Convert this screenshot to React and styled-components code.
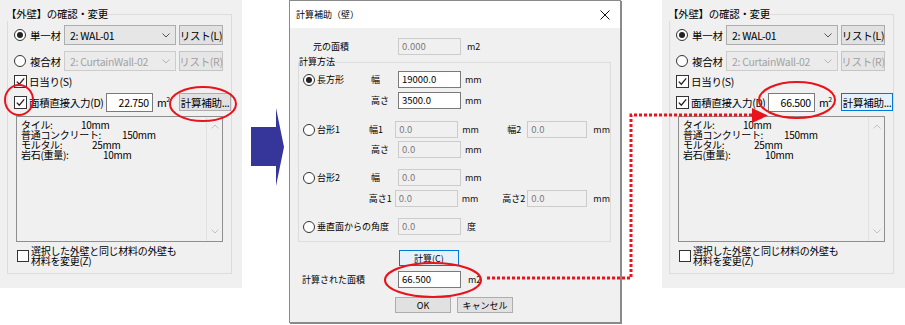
import styled, { createGlobalStyle } from "styled-components";

const GlobalStyle = createGlobalStyle`
  html, body {
    margin: 0;
    padding: 0;
    background: #ffffff;
  }
  body {
    font-family: "Noto Sans CJK JP", "Noto Sans", sans-serif;
    font-size: 11px;
    color: #000;
  }
  * {
    box-sizing: border-box;
  }
`;

const LINES = [
  { label: "タイル:", value: "10mm", tab: 60 },
  { label: "普通コンクリート:", value: "150mm", tab: 101 },
  { label: "モルタル:", value: "25mm", tab: 71 },
  { label: "岩石(重量):", value: "10mm", tab: 82 },
];

function CheckMark() {
  return (
    <svg width="9" height="9" viewBox="0 0 9 9">
      <polyline points="0.8,4.6 3.3,7.2 8.2,1.4" fill="none" stroke="#222" strokeWidth="1.3" />
    </svg>
  );
}

function Chevron({ color = "#555", up = false }) {
  return (
    <svg width="8" height="5" viewBox="0 0 8 5">
      <polyline
        points={up ? "0.5,4.5 4,1 7.5,4.5" : "0.5,0.5 4,4 7.5,0.5"}
        fill="none"
        stroke={color}
        strokeWidth="1"
      />
    </svg>
  );
}

function WallPanel({ area, focused, $w }) {
  return (
    <Panel $w={$w}>
      <Group>
        <Legend>【外壁】の確認・変更</Legend>
        <Row $mt={4}>
          <RadioLabel>
            <Radio $on />
            単一材
          </RadioLabel>
          <Combo>
            2: WAL-01
            <Chevron />
          </Combo>
          <WinButton $w={44}>リスト(L)</WinButton>
        </Row>
        <Row $mt={6}>
          <RadioLabel>
            <Radio />
            複合材
          </RadioLabel>
          <Combo $disabled>
            2: CurtainWall-02
            <Chevron color="#b5b5b5" />
          </Combo>
          <WinButton $w={44} disabled>
            リスト(R)
          </WinButton>
        </Row>
        <Row $mt={3} $h={14}>
          <Check>
            <CheckMark />
          </Check>
          <CheckText>日当り(S)</CheckText>
        </Row>
        <Row $mt={4}>
          <Check>
            <CheckMark />
          </Check>
          <CheckText $w={79}>面積直接入力(D)</CheckText>
          <AreaInput>{area}</AreaInput>
          <Unit>
            m<sup>2</sup>
          </Unit>
          <WinButton $w={53} $h={18} $focus={focused}>
            計算補助...
          </WinButton>
        </Row>
        <Memo>
          <MemoText>
            {LINES.map(l => (
              <MemoLine key={l.label}>
                <MemoLabel $tab={l.tab}>{l.label}</MemoLabel>
                {l.value}
              </MemoLine>
            ))}
          </MemoText>
          <ScrollBar>
            <Chevron color="#c2c2c2" up />
            <Chevron color="#c2c2c2" />
          </ScrollBar>
        </Memo>
        <SameRow>
          <Check $size={12} />
          <SameText>
            選択した外壁と同じ材料の外壁も
            <br />
            材料を変更(Z)
          </SameText>
        </SameRow>
      </Group>
    </Panel>
  );
}

function ShapeRow({ mt, radio, on, label, value, disabled, label2, value2 }) {
  return (
    <Shape $mt={mt}>
      <ShapeName>
        {radio && (
          <>
            <Radio $on={on} />
            {radio}
          </>
        )}
      </ShapeName>
      <FieldLabel>{label}</FieldLabel>
      <DlgInput $disabled={disabled}>{value}</DlgInput>
      <DlgUnit $w={46}>mm</DlgUnit>
      {label2 && (
        <>
          <SecondLabel>{label2}</SecondLabel>
          <DlgInput $w={60} $disabled>
            {value2}
          </DlgInput>
          <DlgUnit $pl={6}>mm</DlgUnit>
        </>
      )}
    </Shape>
  );
}

function CalcDialog() {
  return (
    <Dialog>
      <TitleBar>
        計算補助（壁）
        <svg width="10" height="10" viewBox="0 0 10 10">
          <path d="M0.5 0.5 L9.5 9.5 M9.5 0.5 L0.5 9.5" stroke="#111" strokeWidth="1" />
        </svg>
      </TitleBar>
      <DialogBody>
        <OuterRow $mt={10} $pl={23}>
          <OuterLabel $w={85}>元の面積</OuterLabel>
          <DlgInput $disabled>0.000</DlgInput>
          <DlgUnit $pl={6}>m2</DlgUnit>
        </OuterRow>
        <MethodGroup>
          <MethodLegend>計算方法</MethodLegend>
          <ShapeRow mt={2} radio="長方形" on label="幅" value="19000.0" />
          <ShapeRow mt={4} label="高さ" value="3500.0" />
          <ShapeRow mt={12} radio="台形1" label="幅1" value="0.0" disabled label2="幅2" value2="0.0" />
          <ShapeRow mt={3} label="高さ" value="0.0" disabled />
          <ShapeRow mt={11} radio="台形2" label="幅" value="0.0" disabled />
          <ShapeRow mt={4} label="高さ1" value="0.0" disabled label2="高さ2" value2="0.0" />
          <Shape $mt={11}>
            <ShapeName $w={95}>
              <Radio />
              垂直面からの角度
            </ShapeName>
            <DlgInput $disabled>0.0</DlgInput>
            <DlgUnit $pl={6}>度</DlgUnit>
          </Shape>
        </MethodGroup>
        <OuterRow $mt={8} $pl={109} $h={16}>
          <WinButton $w={60} $h={16} $ml={0} $focus>
            計算(C)
          </WinButton>
        </OuterRow>
        <OuterRow $mt={5} $pl={12}>
          <OuterLabel $w={96}>計算された面積</OuterLabel>
          <DlgInput>66.500</DlgInput>
          <DlgUnit $pl={7}>m2</DlgUnit>
        </OuterRow>
        <OuterRow $mt={9} $pl={105} $h={16}>
          <WinButton $w={56} $h={16} $ml={0}>
            OK
          </WinButton>
          <WinButton $w={56} $h={16} $ml={6}>
            キャンセル
          </WinButton>
        </OuterRow>
      </DialogBody>
    </Dialog>
  );
}

function App() {
  return (
    <>
      <GlobalStyle />
      <Page>
        <WallPanel area="22.750" $w={242} />
        <ArrowCol>
          <svg width="47" height="200" viewBox="0 0 47 200">
            <polygon points="9,127 34,127 34,108 42,147 34,186 34,166 9,166" fill="#35359a" />
          </svg>
        </ArrowCol>
        <CalcDialog />
        <RightSlot>
          <WallPanel area="66.500" focused $w={243} />
        </RightSlot>
        <Marks width="905" height="325" viewBox="0 0 905 325">
          <g fill="none" stroke="#e8141c" strokeWidth="2">
            <ellipse cx="19" cy="100" rx="14" ry="15" />
            <ellipse cx="203" cy="104" rx="33" ry="17" />
            <ellipse cx="433" cy="280" rx="48" ry="17" />
            <ellipse cx="797" cy="100" rx="38" ry="18" />
          </g>
          <path
            d="M487 278 H631 V115 H753"
            fill="none"
            stroke="#e8141c"
            strokeWidth="3"
            strokeDasharray="3 2"
          />
          <polygon points="752,108 768,115.5 752,123" fill="#e8141c" />
        </Marks>
      </Page>
    </>
  );
}

const Page = styled.div`
  position: relative;
  display: flex;
  align-items: flex-start;
  width: 905px;
  height: 325px;
  overflow: hidden;
`;

const Marks = styled.svg`
  position: absolute;
  top: 0;
  left: 0;
  pointer-events: none;
`;

const Panel = styled.div`
  width: ${p => p.$w}px;
  height: 288px;
  padding: 7px 0 0 7px;
  background: #f0f0f0;
  flex-shrink: 0;
  font-size: 10.5px;
  letter-spacing: -0.3px;
`;

const Group = styled.fieldset`
  width: 225px;
  margin: 0;
  padding: 0 0 7px 0;
  border: 1px solid #dcdcdc;
  min-width: 0;
`;

const Legend = styled.legend`
  padding: 0;
  margin-left: -2px;
  line-height: 14px;
`;

const Row = styled.div`
  display: flex;
  align-items: center;
  height: ${p => p.$h || 20}px;
  margin-top: ${p => p.$mt || 0}px;
  padding-left: 6px;
`;

const RadioLabel = styled.div`
  display: flex;
  align-items: center;
  width: 50px;
  gap: 2px;
  white-space: nowrap;
`;

const Radio = styled.span`
  position: relative;
  display: inline-block;
  flex-shrink: 0;
  width: 12px;
  height: 12px;
  margin-right: 2px;
  border: 1px solid #333;
  border-radius: 50%;
  background: #fff;

  &::after {
    content: "";
    display: ${p => (p.$on ? "block" : "none")};
    position: absolute;
    top: 2px;
    left: 2px;
    width: 6px;
    height: 6px;
    border-radius: 50%;
    background: #222;
  }
`;

const Combo = styled.div`
  display: flex;
  align-items: center;
  justify-content: space-between;
  width: 112px;
  height: 20px;
  padding: 0 5px 0 5px;
  background: ${p => (p.$disabled ? "#ebebeb" : "#e6e6e6")};
  border: 1px solid ${p => (p.$disabled ? "#cccccc" : "#adadad")};
  color: ${p => (p.$disabled ? "#a3a3a3" : "#000")};
  white-space: nowrap;
`;

const WinButton = styled.button`
  display: flex;
  align-items: center;
  justify-content: center;
  width: ${p => p.$w}px;
  height: ${p => p.$h || 20}px;
  margin-left: ${p => (p.$ml === undefined ? 3 : p.$ml)}px;
  padding: 0;
  font: inherit;
  letter-spacing: inherit;
  white-space: nowrap;
  color: #000;
  background: ${p => (p.$focus ? "#e5f1fb" : "#e1e1e1")};
  border: 1px solid ${p => (p.$focus ? "#0078d7" : "#adadad")};

  &:disabled {
    color: #a0a0a0;
    background: #e6e6e6;
    border-color: #c4c4c4;
  }
`;

const Check = styled.span`
  display: inline-flex;
  align-items: center;
  justify-content: center;
  flex-shrink: 0;
  width: ${p => p.$size || 13}px;
  height: ${p => p.$size || 13}px;
  border: 1px solid #333;
  background: #fff;
`;

const CheckText = styled.span`
  width: ${p => (p.$w ? `${p.$w}px` : "auto")};
  margin-left: 2px;
  white-space: nowrap;
`;

const AreaInput = styled.div`
  width: 48px;
  height: 19px;
  padding: 0 3px;
  border: 1px solid #7a7a7a;
  background: #fff;
  text-align: right;
  line-height: 17px;
`;

const Unit = styled.span`
  width: 20px;
  margin-left: 4px;

  sup {
    font-size: 7px;
  }
`;

const Memo = styled.div`
  display: flex;
  width: 207px;
  height: 126px;
  margin: 4px 0 0 8px;
  border: 1px solid #8f8f8f;
  background: #f0f0f0;
`;

const MemoText = styled.div`
  flex: 1;
  padding: 3px 0 0 4px;
  font-size: 10px;
  line-height: 10px;
`;

const MemoLine = styled.div`
  display: flex;
  white-space: nowrap;
`;

const MemoLabel = styled.span`
  width: ${p => p.$tab}px;
`;

const ScrollBar = styled.div`
  display: flex;
  flex-direction: column;
  align-items: center;
  justify-content: space-between;
  width: 16px;
  padding: 7px 0 7px;
  border-left: 1px solid #e2e2e2;
`;

const SameRow = styled.div`
  display: flex;
  align-items: center;
  margin: 4px 0 0 9px;
`;

const SameText = styled.span`
  margin-left: 2px;
  font-size: 10px;
  line-height: 10px;
`;

const ArrowCol = styled.div`
  width: 47px;
  flex-shrink: 0;
`;

const Dialog = styled.div`
  display: flex;
  flex-direction: column;
  flex-shrink: 0;
  width: 332px;
  height: 323px;
  border: 1px solid #8a8a8a;
  box-shadow: 1px 1px 0 #8a8a8a;
  background: #f0f0f0;
  font-size: 9px;
`;

const TitleBar = styled.div`
  display: flex;
  align-items: center;
  justify-content: space-between;
  height: 27px;
  padding: 0 10px 0 6px;
  background: #fff;
`;

const DialogBody = styled.div`
  display: flex;
  flex-direction: column;
`;

const OuterRow = styled.div`
  display: flex;
  align-items: center;
  height: ${p => p.$h || 17}px;
  margin-top: ${p => p.$mt}px;
  padding-left: ${p => p.$pl}px;
`;

const OuterLabel = styled.span`
  width: ${p => p.$w}px;
`;

const DlgInput = styled.div`
  flex-shrink: 0;
  width: ${p => p.$w || 63}px;
  height: 17px;
  padding: 0 3px;
  border: 1px solid ${p => (p.$disabled ? "#cccccc" : "#7a7a7a")};
  background: ${p => (p.$disabled ? "#f0f0f0" : "#fff")};
  color: ${p => (p.$disabled ? "#7a7a7a" : "#000")};
  font-size: 9.5px;
  line-height: 14px;
`;

const DlgUnit = styled.span`
  width: ${p => (p.$w ? `${p.$w}px` : "auto")};
  padding-left: ${p => p.$pl || 4}px;
  color: #111;
`;

const MethodGroup = styled.fieldset`
  width: 313px;
  margin: 0 0 0 8px;
  padding: 0 0 6px 0;
  border: 1px solid #dcdcdc;
  min-width: 0;
`;

const MethodLegend = styled.legend`
  padding: 0;
  margin-left: 0;
  line-height: 14px;
`;

const Shape = styled.div`
  display: flex;
  align-items: center;
  height: 17px;
  margin-top: ${p => p.$mt}px;
  padding-left: 4px;
`;

const ShapeName = styled.div`
  display: flex;
  align-items: center;
  width: ${p => p.$w || 68}px;
  white-space: nowrap;
`;

const FieldLabel = styled.span`
  width: 27px;
  white-space: nowrap;
`;

const SecondLabel = styled.span`
  width: 25px;
  padding-right: 6px;
  text-align: right;
  white-space: nowrap;
`;

const RightSlot = styled.div`
  margin-left: 41px;
`;

export default App;
